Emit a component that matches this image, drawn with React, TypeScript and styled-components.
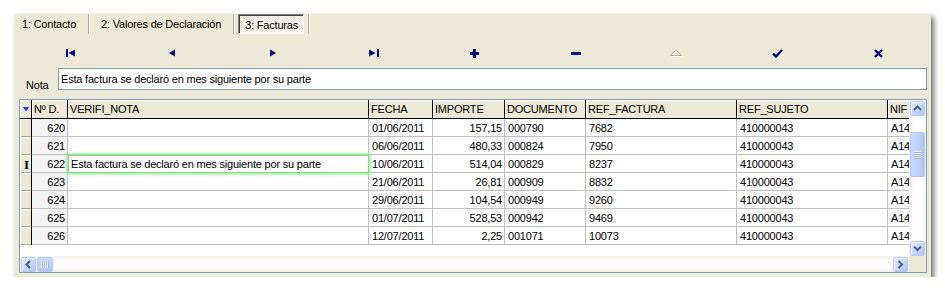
import React from "react";
import styled, { createGlobalStyle } from "styled-components";

const NAVY = "#000080";
const ARROW = "#4D6185";

// anchos de columna: indicador, Nº D., VERIFI_NOTA, FECHA, IMPORTE, DOCUMENTO, REF_FACTURA, REF_SUJETO, NIF
const COLS = [12, 36, 301, 64, 72, 81, 151, 151, 60];
const template = COLS.map(c => `${c}px`).join(" ");

const columns = ["Nº D.", "VERIFI_NOTA", "FECHA", "IMPORTE", "DOCUMENTO", "REF_FACTURA", "REF_SUJETO", "NIF"];

type Row = { id: number; nota: string; fecha: string; importe: string; doc: string; ref: string };

const NOTA = "Esta factura se declaró en mes siguiente por su parte";

const rows: Row[] = [
  { id: 620, nota: "", fecha: "01/06/2011", importe: "157,15", doc: "000790", ref: "7682" },
  { id: 621, nota: "", fecha: "06/06/2011", importe: "480,33", doc: "000824", ref: "7950" },
  { id: 622, nota: NOTA, fecha: "10/06/2011", importe: "514,04", doc: "000829", ref: "8237" },
  { id: 623, nota: "", fecha: "21/06/2011", importe: "26,81", doc: "000909", ref: "8832" },
  { id: 624, nota: "", fecha: "29/06/2011", importe: "104,54", doc: "000949", ref: "9260" },
  { id: 625, nota: "", fecha: "01/07/2011", importe: "528,53", doc: "000942", ref: "9469" },
  { id: 626, nota: "", fecha: "12/07/2011", importe: "2,25", doc: "001071", ref: "10073" },
];

const GlobalStyle = createGlobalStyle`
  html, body {
    margin: 0;
    background: #fff;
  }
  body {
    font-family: "Liberation Sans", Arial, sans-serif;
    font-size: 11px;
    letter-spacing: -0.2px;
    color: #000;
  }
`;

/* ---------- iconos de la barra de navegación ---------- */

const FirstIcon = () => (
  <svg width="10" height="8" viewBox="0 0 10 8">
    <rect x="0" y="0" width="2" height="8" fill={NAVY} />
    <polygon points="9,0.5 2.5,4 9,7.5" fill={NAVY} />
  </svg>
);
const PriorIcon = () => (
  <svg width="6" height="8" viewBox="0 0 6 8">
    <polygon points="6,0.5 0,4 6,7.5" fill={NAVY} />
  </svg>
);
const NextIcon = () => (
  <svg width="6" height="8" viewBox="0 0 6 8">
    <polygon points="0,0.5 6,4 0,7.5" fill={NAVY} />
  </svg>
);
const LastIcon = () => (
  <svg width="10" height="8" viewBox="0 0 10 8">
    <polygon points="0,0.5 6.5,4 0,7.5" fill={NAVY} />
    <rect x="8" y="0" width="2" height="8" fill={NAVY} />
  </svg>
);
const InsertIcon = () => (
  <svg width="9" height="9" viewBox="0 0 9 9" shapeRendering="crispEdges">
    <rect x="3" y="0" width="3" height="9" fill={NAVY} />
    <rect x="0" y="3" width="9" height="3" fill={NAVY} />
  </svg>
);
const DeleteIcon = () => (
  <svg width="10" height="3" viewBox="0 0 10 3" shapeRendering="crispEdges">
    <rect x="0" y="0" width="10" height="3" fill={NAVY} />
  </svg>
);
const EditIcon = () => (
  <svg width="13" height="8" viewBox="0 0 13 8">
    <polygon points="7,1.5 12.5,7.5 1.5,7.5" fill="none" stroke="#fff" strokeWidth="1" />
    <polygon points="6,0.5 11.5,6.5 0.5,6.5" fill="none" stroke="#ACA899" strokeWidth="1" />
  </svg>
);
const PostIcon = () => (
  <svg width="11" height="9" viewBox="0 0 11 9">
    <path d="M1 4.5 L4 7.5 L10 1" fill="none" stroke={NAVY} strokeWidth="2.4" />
  </svg>
);
const CancelIcon = () => (
  <svg width="9" height="9" viewBox="0 0 9 9">
    <path d="M1 1 L8 8 M8 1 L1 8" fill="none" stroke={NAVY} strokeWidth="2.4" />
  </svg>
);

const navIcons = [FirstIcon, PriorIcon, NextIcon, LastIcon, InsertIcon, DeleteIcon, EditIcon, PostIcon, CancelIcon];

/* ---------- flechas de las barras de desplazamiento ---------- */

const Chevron: React.FC<{ dir: "up" | "down" | "left" | "right" }> = ({ dir }) => {
  const d = {
    up: "M1 6 L4.5 2.5 L8 6",
    down: "M1 2.5 L4.5 6 L8 2.5",
    left: "M6 1 L2.5 4.5 L6 8",
    right: "M2.5 1 L6 4.5 L2.5 8",
  }[dir];
  return (
    <svg width="9" height="9" viewBox="0 0 9 9">
      <path d={d} fill="none" stroke={ARROW} strokeWidth="2" />
    </svg>
  );
};

const App: React.FC = () => {
  return (
    <Page>
      <GlobalStyle />
      <Panel>
        <TabStrip>
          <Tab $first>1: Contacto</Tab>
          <Tab>2: Valores de Declaración</Tab>
          <TabSlot>
            <ActiveTab>3: Facturas</ActiveTab>
          </TabSlot>
        </TabStrip>

        {/* navegador */}
        <NavBar>
          {navIcons.map((Icon, i) => (
            <NavButton key={i}>
              <Icon />
            </NavButton>
          ))}
        </NavBar>

        <NotaRow>
          <NotaLabel>Nota</NotaLabel>
          <NotaInput readOnly value={NOTA} />
        </NotaRow>

        <Grid>
          <GridArea>
            <HeaderRow>
              <HeaderCell $indicator>
                <svg width="6" height="5" viewBox="0 0 6 5">
                  <polygon points="0,0 6,0 3,4.5" fill="#1E3CE0" />
                </svg>
              </HeaderCell>
              {columns.map(c => (
                <HeaderCell key={c}>{c}</HeaderCell>
              ))}
            </HeaderRow>

            {rows.map(r => (
              <DataRow key={r.id}>
                <IndicatorCell>{r.nota ? <Caret>I</Caret> : null}</IndicatorCell>
                <Cell $right $key>{r.id}</Cell>
                {r.nota ? <EditorCell>{r.nota}</EditorCell> : <Cell />}
                <Cell>{r.fecha}</Cell>
                <Cell $right>{r.importe}</Cell>
                <Cell>{r.doc}</Cell>
                <Cell>{r.ref}</Cell>
                <Cell>410000043</Cell>
                <Cell>A14</Cell>
              </DataRow>
            ))}
          </GridArea>

          <VScroll>
            <ScrollButton>
              <Chevron dir="up" />
            </ScrollButton>
            <VThumb>
              <VGrip />
            </VThumb>
            <ScrollButton>
              <Chevron dir="down" />
            </ScrollButton>
          </VScroll>

          <HScroll>
            <ScrollButton>
              <Chevron dir="left" />
            </ScrollButton>
            <HThumb>
              <HGrip />
            </HThumb>
            <HTrack />
            <ScrollButton>
              <Chevron dir="right" />
            </ScrollButton>
          </HScroll>

          <Corner />
        </Grid>
      </Panel>
    </Page>
  );
};

export default App;

const Page = styled.div`
  padding: 14px 0 0 14px;
`;

const Panel = styled.div`
  width: 917px;
  height: 263px;
  background: #ece9d8;
  box-shadow: 3px 3px 5px rgb(0 0 0 / 55%);
  display: flex;
  flex-direction: column;
`;

const TabStrip = styled.div`
  height: 20px;
  display: flex;
`;

const Tab = styled.div<{ $first?: boolean }>`
  display: flex;
  align-items: center;
  padding: 0 ${p => (p.$first ? 12 : 12)}px 0 ${p => (p.$first ? 8 : 12)}px;
  border-right: 1px solid #aca899;
  box-shadow: 1px 0 0 #fff;
  white-space: nowrap;
`;

const TabSlot = styled.div`
  display: flex;
  padding: 0 4px;
  border-right: 1px solid #aca899;
  box-shadow: 1px 0 0 #fff;
`;

const ActiveTab = styled.div`
  display: flex;
  align-items: center;
  padding: 1px 5px 0 6px;
  border: 1px solid;
  border-color: #808080 #fff #fff #808080;
  box-shadow: inset 1px 1px 0 #404040;
  background: repeating-conic-gradient(#fff 0 25%, #ece9d8 0 50%) 0 0 / 2px 2px;
  white-space: nowrap;
`;

const NavBar = styled.div`
  height: 34px;
  display: flex;
  padding-left: 6px;
`;

const NavButton = styled.div`
  flex: 0 0 101px;
  display: flex;
  align-items: center;
  justify-content: center;
  padding-top: 4px;
`;

const NotaRow = styled.div`
  height: 22px;
  display: flex;
  align-items: flex-end;
  gap: 8px;
  padding: 0 4px 0 12px;
`;

const NotaLabel = styled.span`
  line-height: 13px;
  margin-bottom: -2px;
  width: 24px;
`;

const NotaInput = styled.input`
  flex: 1;
  height: 22px;
  box-sizing: border-box;
  margin: 0;
  padding: 0 2px;
  border: 1px solid #7f9db9;
  background: #fff;
  font: 11px "Liberation Sans", Arial, sans-serif;
  letter-spacing: -0.2px;
  color: #000;
  outline: none;
`;

const Grid = styled.div`
  margin: 9px 4px 0 5px;
  width: 908px;
  height: 174px;
  box-sizing: border-box;
  border: 1px solid #7f9db9;
  background: #fff;
  display: grid;
  grid-template-columns: 1fr 17px;
  grid-template-rows: 1fr 16px;
`;

const GridArea = styled.div`
  overflow: hidden;
`;

const HeaderRow = styled.div`
  display: grid;
  grid-template-columns: ${template};
  height: 19px;
  border-bottom: 1px solid #000;
  box-sizing: border-box;
`;

const HeaderCell = styled.div<{ $indicator?: boolean }>`
  display: flex;
  align-items: center;
  justify-content: ${p => (p.$indicator ? "center" : "flex-start")};
  padding-left: ${p => (p.$indicator ? 0 : 2)}px;
  background: #ece9d8;
  border-right: 1px solid #000;
  box-shadow: inset 1px 1px 0 #fff;
  white-space: nowrap;
  overflow: hidden;
`;

const DataRow = styled.div`
  display: grid;
  grid-template-columns: ${template};
  height: 18px;
`;

const Cell = styled.div<{ $right?: boolean; $key?: boolean }>`
  display: flex;
  align-items: center;
  justify-content: ${p => (p.$right ? "flex-end" : "flex-start")};
  padding: 0 2px 0 3px;
  border-right: 1px solid #c0c0c0;
  border-bottom: 1px solid #c0c0c0;
  background: ${p => (p.$key ? "#f4f4f4" : "#fff")};
  white-space: nowrap;
  overflow: hidden;
`;

const EditorCell = styled.div`
  position: relative;
  z-index: 1;
  display: flex;
  align-items: center;
  padding: 0 2px;
  border: 1px solid #86dc86;
  box-shadow: 0 0 2px 2px rgb(150 230 150 / 70%);
  background: #fff;
  white-space: nowrap;
`;

const IndicatorCell = styled.div`
  display: flex;
  align-items: center;
  justify-content: center;
  background: #ece9d8;
  border-right: 1px solid #000;
  box-shadow: inset 1px 1px 0 #fff, inset 0 -1px 0 #aca899;
`;

const Caret = styled.span`
  font: bold 13px "Liberation Serif", "Times New Roman", serif;
  line-height: 13px;
  padding-left: 2px;
`;

const ScrollButton = styled.div`
  flex: 0 0 auto;
  width: 15px;
  height: 15px;
  margin: 0 1px;
  box-sizing: border-box;
  border: 1px solid #b4c8f5;
  border-radius: 2px;
  background: linear-gradient(135deg, #e1eafe 0%, #c6d5fc 55%, #b3c6f3 100%);
  box-shadow: inset 1px 1px 0 #f4f7ff;
  display: flex;
  align-items: center;
  justify-content: center;
`;

const VScroll = styled.div`
  display: flex;
  flex-direction: column;
  justify-content: space-between;
  padding: 1px 0 0;
  background: linear-gradient(90deg, #f3f1ec, #fefefe 30%, #fefefe 70%, #f3f1ec);
`;

const VThumb = styled.div`
  width: 15px;
  height: 45px;
  margin: 16px 1px auto;
  box-sizing: border-box;
  border: 1px solid #b4c8f5;
  border-radius: 2px;
  background: linear-gradient(90deg, #cad9fd, #bed0fb 60%, #b2c5f4);
  display: flex;
  align-items: center;
  justify-content: center;
`;

const VGrip = styled.div`
  width: 7px;
  height: 8px;
  background: repeating-linear-gradient(180deg, #eef3fe 0 1px, #9bb4ee 1px 2px);
`;

const HScroll = styled.div`
  display: flex;
  align-items: center;
  background: linear-gradient(180deg, #f3f1ec, #fefefe 30%, #fefefe 70%, #f3f1ec);
`;

const HThumb = styled.div`
  width: 16px;
  height: 15px;
  box-sizing: border-box;
  border: 1px solid #b4c8f5;
  border-radius: 2px;
  background: linear-gradient(180deg, #cad9fd, #bed0fb 60%, #b2c5f4);
  display: flex;
  align-items: center;
  justify-content: center;
`;

const HGrip = styled.div`
  width: 8px;
  height: 7px;
  background: repeating-linear-gradient(90deg, #eef3fe 0 1px, #9bb4ee 1px 2px);
`;

const HTrack = styled.div`
  flex: 1;
`;

const Corner = styled.div`
  background: #ece9d8;
`;
